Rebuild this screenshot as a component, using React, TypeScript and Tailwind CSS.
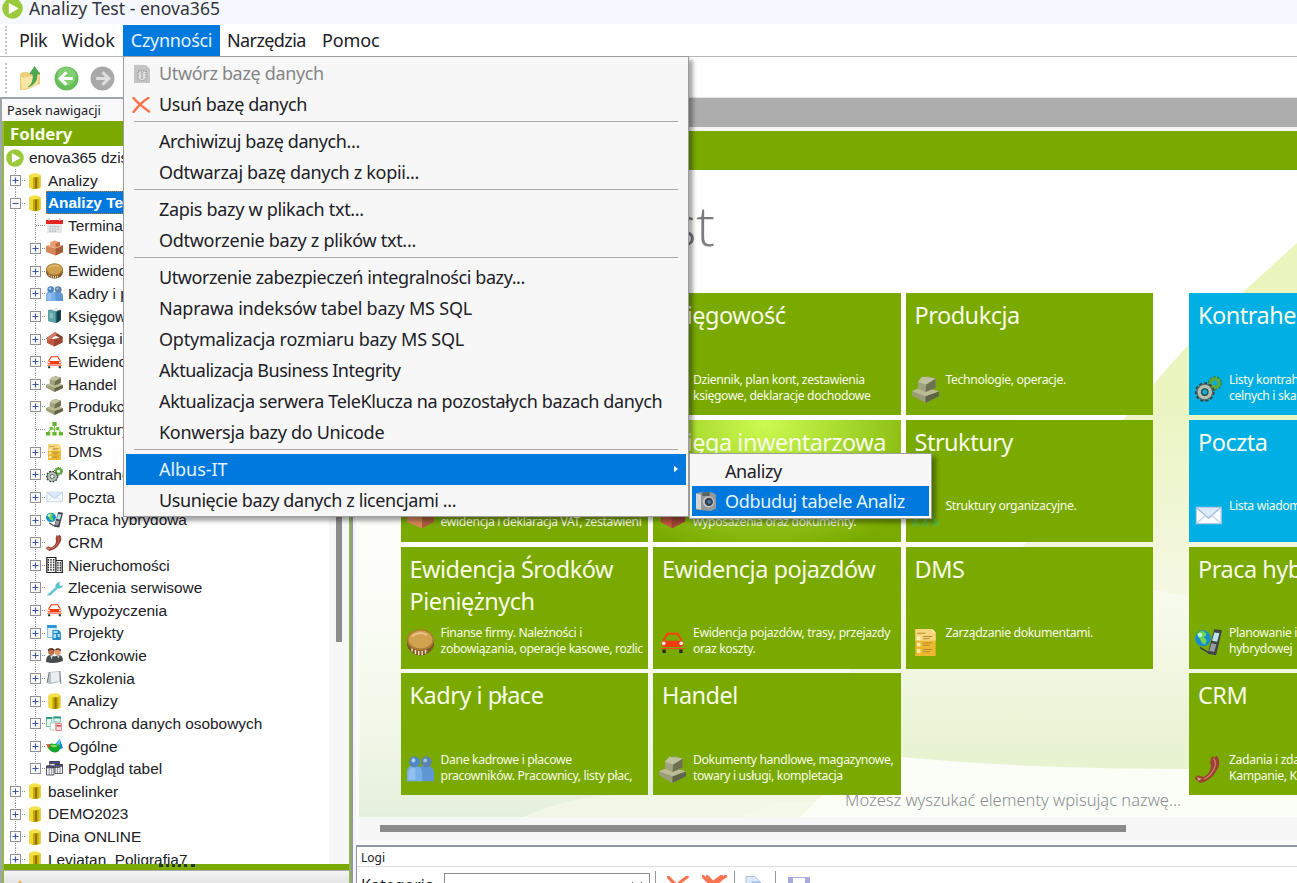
import React from "react";

type Kind =
  | "db" | "calendar" | "box" | "coin" | "people" | "book" | "house" | "car" | "blocks" | "org" | "doc"
  | "gears" | "mail" | "globe" | "phone" | "building" | "wrench" | "project" | "members" | "training"
  | "privacy" | "general" | "tables" | "camera";

function Art({ kind }: { kind: Kind }) {
  switch (kind) {
    case "db":
      return (<g><path d="M2.500 2.300h11v12.200q-5.500 3-11 0z" fill="#c9a800" /><path d="M2.500 2.300h3.500v13.200q-2.500-.3-3.500-1z" fill="#f0dc30" /><path d="M8 4h2v11.500H8z" fill="#8d7400" /><path d="M11.700 3h1.800v11.500l-1.800.8z" fill="#e2cb24" /><ellipse cx="8" cy="2.300" rx="5.500" ry="2" fill="#f3e248" /></g>);
    case "calendar":
      return (<g><path d="M1 2h14v13H1z" fill="#e4e7e8" /><path d="M0 2h16v4H0z" fill="#e32420" /><path d="M3 0v3M13 0v3" stroke="#bbb" strokeWidth="1.200" /><path d="M3 8.500h10M3 11h10M3 13.200h7" stroke="#a9b3b7" strokeWidth="1" strokeDasharray="1.500 1" /></g>);
    case "box":
      return (<g><path d="M0 6l6-2 10 1.500V12l-7 3.500L0 12z" fill="#d58659" /><path d="M9 8.500l7-3V12l-7 3.500z" fill="#a85d38" /><path d="M0 6l6-2 10 1.500-7 3z" fill="#f2b58d" /><path d="M4 2l4-1.500L13 2v4L9 7.500 4 6z" fill="#e79d70" /><path d="M9 3.500L13 2v4L9 7.500z" fill="#b86d45" /></g>);
    case "coin":
      return (<g><path d="M0 6.500v3q1 4.500 5.500 5.700l2.500.6 2.500-.6q4.500-1.200 5.500-5.700v-3z" fill="#7d5526" /><path d="M3 11.500v1.800M5 12.500v2.300M7 13v2.500M9 13v2.500M11 12.500v2" stroke="#f3e2c4" strokeWidth=".9" /><ellipse cx="8" cy="6.500" rx="8" ry="6.300" fill="#a87a32" /><ellipse cx="8" cy="6.200" rx="7.100" ry="5.300" fill="#d0a250" /><path d="M3 4.500q4-3.500 9-1" stroke="#e6c688" fill="none" /></g>);
    case "people":
      return (<g><path d="M6.500 15V9q0-3 2-3h5q2.500 1 2.500 4v5z" fill="#5f96d4" /><circle cx="11.500" cy="3.500" r="3.200" fill="#5d83b0" /><path d="M0 15V9q0-2.500 2-3h4q3 .5 3 4v5z" fill="#78aee6" /><path d="M1 14v-4q0-2.500 2-3h2v7z" fill="#9cc9f4" opacity=".7" /><circle cx="4.500" cy="3.500" r="3.200" fill="#4f87c4" /><circle cx="3.800" cy="2.600" r="1.200" fill="#a9d2f5" /><circle cx="10.800" cy="2.600" r="1.100" fill="#a9c8e0" /></g>);
    case "book":
      return (<g><path d="M2 2l8-1.500L14 2v10l-4 3-8-2z" fill="#2c7c83" /><path d="M2 2l7 1.500V15l-7-2z" fill="#5fa4a7" /><path d="M10 3.800L14 2v10l-4 3z" fill="#173f4a" /><path d="M3 1.800l7-1.200 3.500 1-4 1.700z" fill="#eceeef" /><path d="M3.500 5l3 .6v5l-3-.7z" fill="#8dc1bf" /></g>);
    case "house":
      return (<g><path d="M1 7l6 1 8.500-2v5.500L8 15.500l-7-3.500z" fill="#c0563f" /><path d="M7.500 9l8-3v5.500l-8 4z" fill="#9e4635" /><path d="M0 7.500L8.500 1l7.500 5-1 2-6-3.500-7 5z" fill="#8b3b2d" /><path d="M0 7.500L8.500 1l2.500 1.500-8.500 7z" fill="#d37b62" /></g>);
    case "car":
      return (<g fill="none"><path d="M2.500 7L5 2.800h6L13.500 7" stroke="#ff3d10" strokeWidth="1.100" /><rect x="1.500" y="7" width="13" height="3.600" rx="1.500" fill="#f33b10" /><circle cx="2.800" cy="8.500" r="1.100" fill="#ffe8dc" /><circle cx="13.200" cy="8.500" r="1.100" fill="#ffe8dc" /><path d="M1 11.600h14" stroke="#ee4c20" strokeWidth=".7" /><path d="M2 12.200h2v2H2zM12 12.200h2v2h-2z" fill="#24301a" /></g>);
    case "blocks":
      return (<g><path d="M0 9l6-2.500L16 9v3L8 16l-8-4.500z" fill="#9a9d76" /><path d="M8 12l8-3v3L8 16z" fill="#5f6446" /><path d="M0 9l6-2.500L16 9l-8 3z" fill="#b9bc94" /><path d="M3.500 3L9 0l5 1.500V7L8 9.500 3.500 7.500z" fill="#a0a37e" /><path d="M8.500 4.500L14 1.500V7L8 9.500z" fill="#6d7151" /><path d="M3.500 3.500L6 .5l8 1-5.500 3.500z" fill="#bfc19f" /></g>);
    case "org":
      return (<g fill="#64b52c"><path d="M6 1h4v4H6zM3.500 6h2.800v3H3.500zM9.700 6h2.800v3H9.700zM0 11h4v3.500H0zM6 11h4v3.500H6zM12 11h4v3.500h-4z" /><path d="M8 4v8M2 11l3-3h6l3 3" fill="none" stroke="#78c442" strokeWidth="1" /></g>);
    case "doc":
      return (<g><path d="M2 0h10l2 2v14H2z" fill="#ecb930" /><path d="M2 0h10l2 2v5H2z" fill="#f8d77c" /><path d="M12 0v2h2z" fill="#fff0bd" /><path d="M3 4.500h2v2H3zM3 8.200h2v2H3zM3 12h2v2H3z" fill="#fff0b8" /><path d="M3 2.500h5M6.500 4.500h5.500M6.500 5.800h4M6.500 8.300h5.500M6.500 9.600h4M6.500 12.200h5.500M6.500 13.500h4" stroke="#b08a34" strokeWidth=".6" /></g>);
    case "gears":
      return (<g fill="none"><circle cx="11.800" cy="4.200" r="3.700" stroke="#397c29" strokeWidth="1" strokeDasharray="1.300 1" /><circle cx="11.800" cy="4.200" r="2.500" stroke="#62a83e" strokeWidth="2" /><circle cx="5.800" cy="9.500" r="5.200" stroke="#33403b" strokeWidth="1.300" strokeDasharray="1.700 1.300" /><circle cx="5.800" cy="9.500" r="4.600" stroke="#55625a" strokeWidth="1" /><circle cx="5.800" cy="9.500" r="3.200" stroke="#b5c1b4" strokeWidth="2.200" /><circle cx="5.800" cy="9.500" r="1.900" stroke="#3b4843" strokeWidth=".8" /></g>);
    case "mail":
      return (<g><path d="M.8 3.200h14.700v9.600H.8z" fill="#f8fbff" stroke="#b4c9df" strokeWidth=".7" /><path d="M1.200 3.600l6.800 6 7-6" fill="#dce9f9" stroke="#9bb8db" strokeWidth=".7" /><path d="M1.200 12.300l5-4.300M15 12.300L10 8" stroke="#c3d5e9" strokeWidth=".7" /></g>);
    case "globe":
      return (<g><circle cx="4.700" cy="5.500" r="4.700" fill="#148fd0" /><path d="M1 3q3-3 5-1 2 1-1 3 3 1 1 4-2 0-3-3z" fill="#70d650" /><circle cx="3" cy="3.500" r="1.300" fill="#d4ffff" opacity=".8" /><path d="M11.500 0l4.500.8-3.500 14.700-5-.8z" fill="#414549" /><path d="M11.500 2l3 .5-1.400 5-3-.6z" fill="#b8e4f0" /><path d="M9.700 8.500l3 .5-1.300 4.500-3-.5z" fill="#959ba0" /><path d="M3 11l5 3" stroke="#3b444a" /></g>);
    case "phone":
      return (<g><path d="M10 0q1 1.500 3-.2 3 4-.4 9.300Q9 15 3 16L0 13.500q0-1.500 2-2l3 1q4-2 4.500-6.500L9 3.500z" fill="#9d3f31" /><path d="M11 1.500q2 2.500.3 6-2.500 5-6 6" stroke="#c97968" fill="none" strokeWidth=".8" /><path d="M1 12.500l3 1-2 1.300z" fill="#caa47b" /></g>);
    case "building":
      return (<g><path d="M.8.500h8.500v15H.8zM9.300 3.500h6v12h-6z" fill="#fff" stroke="#222" strokeWidth="1.200" /><path d="M2.200 2v12M4.700 2v12M7.200 2v12M11.200 5v9M13.500 5v9" stroke="#333" strokeWidth="1.300" strokeDasharray="1.700 .8" /></g>);
    case "wrench":
      return (<g><path d="M1 15l8-8q-.7-3 3-5l1-.5-.5 3.200L14 6l2-1q-.5 4-5 3.500L4 15.500H1z" fill="#5ac4cf" /><path d="M2.500 14l7-7" stroke="#8bd9df" /></g>);
    case "project":
      return (<g><path d="M1.500.5h8v12h-8z" fill="#e7f1f8" stroke="#6fb0dc" strokeWidth=".8" /><path d="M1 0h9v3H1z" fill="#289bd4" /><path d="M6 5h6l2 2v8H6z" fill="#278ac7" /><path d="M7 6h4v2H7zM7 9h2.500v4H7zM11 9h2v3h-2z" fill="#a8dff1" /></g>);
    case "members":
      return (<g><circle cx="5" cy="4" r="3" fill="#ba704a" /><circle cx="11" cy="4" r="3" fill="#e09a6c" /><path d="M2 2.500q2.500-3.500 6 0M9 2q2.500-2.500 4.800.5" stroke="#4c2a1c" fill="none" strokeWidth="1.400" /><path d="M0 14q0-7 4-7l4 1.500L12 7q4 0 4 6-8 3.500-16 1z" fill="#454b4d" /><path d="M4 7.500l1 4 1.500-3.500M10.500 7.500l1 3 1.500-3" fill="#d2d6d8" /></g>);
    case "training":
      return (<g><path d="M3 2l10-1v11l-9 2-3-1z" fill="#b3bcc4" /><path d="M4.500 2.500l8-.8v9.500l-8 1.300z" fill="#e8edf2" /><path d="M3 2L1 13M13 1l1 13" stroke="#74808a" /></g>);
    case "privacy":
      return (<g><path d="M.5 1.500h5v9h-5zM7.500 1h6v5h-6z" fill="#eaf6f0" stroke="#51b29b" strokeWidth=".8" /><path d="M0 1h6v2H0zM7 .5h7v2H7z" fill="#2a9a89" /><path d="M4 7h5v7H4z" fill="#fff" stroke="#8cb79c" strokeWidth=".6" /><path d="M9.500 7.500h5v7h-5z" fill="#fbdede" stroke="#df6b6b" strokeWidth=".8" /><path d="M10 9h4v1.500h-4z" fill="#d53939" /></g>);
    case "general":
      return (<g><path d="M7 8l6-7 3 9-4 2z" fill="#1488df" /><path d="M9 7l4-6v8z" fill="#61c9ff" /><path d="M1 7q4-2.500 7-1l5.500 1q0 8-5.500 7.500T1 7z" fill="#16a52c" /><path d="M0 6l5 1-3 3z" fill="#e44b31" /><path d="M4 7q4-1 7 1-2 2-5 1z" fill="#7ee35d" /></g>);
    case "tables":
      return (<g stroke="#3a3c43" strokeWidth=".8"><path d="M3.500.5h9v6h-9zM.5 5h7v9h-7zM8.500 3.500h7v9h-7z" fill="#f2f2f6" /><path d="M3.500.5h9V2.500h-9zM.5 5h7v1.800h-7zM8.500 3.500h7v1.800h-7z" fill="#4d519f" /><path d="M3 7v7M5.300 7v7M10.800 6v6M13.200 6v6" strokeWidth=".5" /></g>);
    case "camera":
      return (<g><path d="M0 2l3-1h10l3 2v11l-4 2-12-1z" fill="#949a9b" /><path d="M0 2l4 1v12l-4-1z" fill="#d5d6d4" /><path d="M5 1h6v3H5z" fill="#5c6261" /><circle cx="10" cy="8.700" r="4.500" fill="#c2c8cc" /><circle cx="10.300" cy="8.700" r="3.300" fill="#373e46" /><circle cx="10.600" cy="8.700" r="1.700" fill="#3e7499" /></g>);
  }
}

function Icon({ kind, className }: { kind: Kind; className: string }) {
  return (
    <svg viewBox="0 0 16 16" className={className} preserveAspectRatio="none">
      <Art kind={kind} />
    </svg>
  );
}

function Logo({ className }: { className: string }) {
  return (
    <svg viewBox="0 0 20 20" className={className}>
      <circle cx="10" cy="10" r="9.800" fill="#9ac93a" />
      <path d="M6.500 4.500L16 10l-9.500 5.500z" fill="#fff" />
    </svg>
  );
}

function Cross({ className }: { className: string }) {
  return (
    <svg viewBox="0 0 18 16" className={className}>
      <path d="M1 1q4 5 15.500 13.500M16 .8Q8 6 1 15" fill="none" stroke="#fa7350" strokeWidth="2.500" strokeLinecap="round" />
    </svg>
  );
}

type Node = { label: string; kind?: Kind; level: 0 | 1 | 2; leaf?: boolean; open?: boolean; last?: boolean };

const nodes: Node[] = [
  { label: "enova365 dziś", level: 0 },
  { label: "Analizy", kind: "db", level: 1 },
  { label: "Analizy Test", kind: "db", level: 1, open: true },
  { label: "Terminarz", kind: "calendar", level: 2, leaf: true },
  { label: "Ewidencja", kind: "box", level: 2 },
  { label: "Ewidencja", kind: "coin", level: 2 },
  { label: "Kadry i płace", kind: "people", level: 2 },
  { label: "Księgowość", kind: "book", level: 2 },
  { label: "Księga inw", kind: "house", level: 2 },
  { label: "Ewidencja", kind: "car", level: 2 },
  { label: "Handel", kind: "blocks", level: 2 },
  { label: "Produkcja", kind: "blocks", level: 2 },
  { label: "Struktury", kind: "org", level: 2, leaf: true },
  { label: "DMS", kind: "doc", level: 2 },
  { label: "Kontrahenci", kind: "gears", level: 2 },
  { label: "Poczta", kind: "mail", level: 2 },
  { label: "Praca hybrydowa", kind: "globe", level: 2 },
  { label: "CRM", kind: "phone", level: 2 },
  { label: "Nieruchomości", kind: "building", level: 2 },
  { label: "Zlecenia serwisowe", kind: "wrench", level: 2 },
  { label: "Wypożyczenia", kind: "car", level: 2 },
  { label: "Projekty", kind: "project", level: 2 },
  { label: "Członkowie", kind: "members", level: 2 },
  { label: "Szkolenia", kind: "training", level: 2 },
  { label: "Analizy", kind: "db", level: 2 },
  { label: "Ochrona danych osobowych", kind: "privacy", level: 2 },
  { label: "Ogólne", kind: "general", level: 2 },
  { label: "Podgląd tabel", kind: "tables", level: 2, last: true },
  { label: "baselinker", kind: "db", level: 1 },
  { label: "DEMO2023", kind: "db", level: 1 },
  { label: "Dina ONLINE", kind: "db", level: 1 },
  { label: "Leviatan_Poligrafia7", kind: "db", level: 1 },
];

function Guide({ box, leaf, open, last }: { box?: boolean; leaf?: boolean; open?: boolean; last?: boolean }) {
  return (
    <svg viewBox="0 0 20 22.64" className="h-full w-5 shrink-0">
      <path d={last ? "M10.500 0v11" : "M10.500 0v22.640"} stroke="#858585" strokeDasharray="1 1" />
      {(box || leaf) && <path d="M11 11.500h9.500" stroke="#858585" strokeDasharray="1 1" />}
      {box && (
        <g>
          <rect x="5.500" y="6.500" width="10" height="10" fill="#fbfbfb" stroke="#909090" />
          <path d={open ? "M7.500 11.500h6" : "M7.500 11.500h6M10.500 8.500v6"} stroke="#3c55a5" strokeWidth="1.100" />
        </g>
      )}
    </svg>
  );
}

function TreeRow({ n }: { n: Node }) {
  if (n.level === 0) {
    return (
      <div className="flex h-[22.64px] items-center pl-[2px]">
        <Logo className="h-[18px] w-[18px]" />
        <span className="ml-[5px]">{n.label}</span>
      </div>
    );
  }
  return (
    <div className="flex h-[22.64px] items-center pl-px">
      <Guide box={n.level === 1} open={n.open} />
      {n.level === 2 && <Guide box={!n.leaf} leaf={n.leaf} last={n.last} />}
      {n.level === 1 ? (
        <Icon kind="db" className="ml-[2px] h-4 w-4 shrink-0" />
      ) : (
        <Icon kind={n.kind as Kind} className="ml-px h-4 w-[17px] shrink-0" />
      )}
      {n.open ? (
        <span className="mt-[-2px] ml-[3px] h-[23px] w-[110px] border border-dotted border-[#c07a30] bg-[#0078dc] px-px leading-[22px] font-bold text-white">{n.label}</span>
      ) : (
        <span className="ml-[5px]">{n.label}</span>
      )}
    </div>
  );
}

type TileData = { title?: string; lines?: string[]; kind?: Kind; blue?: boolean; hot?: boolean };

const tiles: TileData[] = [
  {},
  { title: "Księgowość", lines: ["Dziennik, plan kont, zestawienia", "księgowe, deklaracje dochodowe"] },
  { title: "Produkcja", lines: ["Technologie, operacje."], kind: "blocks" },
  { lines: ["", "ewidencja i deklaracja VAT, zestawieni"], kind: "box" },
  { title: "Księga inwentarzowa", lines: ["", "wyposażenia oraz dokumenty."], kind: "house", hot: true },
  { title: "Struktury", lines: ["Struktury organizacyjne."], kind: "org" },
  { title: "Ewidencja Środków Pieniężnych", lines: ["Finanse firmy. Należności i", "zobowiązania, operacje kasowe, rozlic"], kind: "coin" },
  { title: "Ewidencja pojazdów", lines: ["Ewidencja pojazdów, trasy, przejazdy", "oraz koszty."], kind: "car" },
  { title: "DMS", lines: ["Zarządzanie dokumentami."], kind: "doc" },
  { title: "Kadry i płace", lines: ["Dane kadrowe i płacowe", "pracowników. Pracownicy, listy płac,"], kind: "people" },
  { title: "Handel", lines: ["Dokumenty handlowe, magazynowe,", "towary i usługi, kompletacja"], kind: "blocks" },
];

const sideTiles: TileData[] = [
  { title: "Kontrahenci", lines: ["Listy kontrahentów,", "celnych i skarbowych"], kind: "gears", blue: true },
  { title: "Poczta", lines: ["Lista wiadomości"], kind: "mail", blue: true },
  { title: "Praca hybrydowa", lines: ["Planowanie i", "hybrydowej"], kind: "globe" },
  { title: "CRM", lines: ["Zadania i zdarzenia,", "Kampanie, Kontakty"], kind: "phone" },
];

function Tile({ t }: { t: TileData }) {
  const bg = t.blue
    ? "bg-[#00b0e4]"
    : t.hot
      ? "bg-[radial-gradient(ellipse_75%_110%_at_45%_3%,#cdfa50_0%,#a5d82c_45%,#7aab00_100%)]"
      : "bg-[#7aa900]";
  return (
    <div className={"flex flex-col overflow-hidden text-[#f8fce9] " + bg}>
      <div className="h-[78.500px] shrink-0 pt-[6px] pl-[9px] text-[23.5px] leading-8 tracking-[-0.5px]">{t.title}</div>
      <div className="flex h-8 pl-[6px]">
        <div className="w-[34px] shrink-0 pt-[4px]">{t.kind && <Icon kind={t.kind} className="h-[27px] w-[27px]" />}</div>
        <div className="text-[12.2px] leading-4 tracking-[-0.35px] whitespace-nowrap">
          {(t.lines ?? []).map((l, i) => (
            <div key={i} className="h-4">{l}</div>
          ))}
        </div>
      </div>
    </div>
  );
}

function Backdrop() {
  return (
    <svg viewBox="359 170 938 647" className="absolute inset-0 h-full w-full" preserveAspectRatio="none">
      <defs>
        <linearGradient id="base" x1="0" y1="0" x2="0" y2="1">
          <stop offset="0" stopColor="#fff" /><stop offset=".45" stopColor="#fcfdf8" /><stop offset=".8" stopColor="#f1f7e8" /><stop offset="1" stopColor="#e5f0dc" />
        </linearGradient>
        <linearGradient id="ray" x1="0" y1="0" x2="0" y2="1">
          <stop offset="0" stopColor="#e9f6bd" /><stop offset=".4" stopColor="#eaf5bf" /><stop offset="1" stopColor="#f5f8e6" />
        </linearGradient>
        <linearGradient id="hill" x1="0" y1="0" x2="0" y2="1">
          <stop offset="0" stopColor="#fbfef6" /><stop offset=".35" stopColor="#f3f8e4" /><stop offset=".75" stopColor="#e8f3d2" /><stop offset="1" stopColor="#e8f3d2" />
        </linearGradient>
      </defs>
      <path d="M359 170h938v647H359z" fill="#fff" />
      <path d="M359 400h650v417H359z" fill="url(#base)" />
      <path d="M1297 243L1242 293Q1190 340 1154 384L1123 420Q1080 480 1020 550v60h277z" fill="url(#ray)" />
      <path d="M850 590q150-60 304 0 80 16 143 20v207H850z" fill="url(#hill)" />
      <path d="M523 817q60-27 130-22h190v22z" fill="#f1f7e4" />
      <path d="M740 817l40-15h140l-20 15z" fill="#f5f9e8" />
      <path d="M800 817q60-62 101-60 90 8 160 10 120 4 236 0v50z" fill="#fafef6" />
    </svg>
  );
}

type MenuEntry = { text: string; track: string } | null;
const menuEntries: MenuEntry[] = [
  { text: "Utwórz bazę danych", track: "tracking-[-0.34px]" },
  { text: "Usuń bazę danych", track: "tracking-[-0.40px]" },
  null,
  { text: "Archiwizuj bazę danych...", track: "tracking-[-0.40px]" },
  { text: "Odtwarzaj bazę danych z kopii...", track: "tracking-[-0.31px]" },
  null,
  { text: "Zapis bazy w plikach txt...", track: "tracking-[-0.31px]" },
  { text: "Odtworzenie bazy z plików txt...", track: "tracking-[-0.29px]" },
  null,
  { text: "Utworzenie zabezpieczeń integralności bazy...", track: "tracking-[-0.42px]" },
  { text: "Naprawa indeksów tabel bazy MS SQL", track: "tracking-[-0.22px]" },
  { text: "Optymalizacja rozmiaru bazy MS SQL", track: "tracking-[-0.22px]" },
  { text: "Aktualizacja Business Integrity", track: "tracking-[-0.49px]" },
  { text: "Aktualizacja serwera TeleKlucza na pozostałych bazach danych", track: "tracking-[-0.37px]" },
  { text: "Konwersja bazy do Unicode", track: "tracking-[-0.30px]" },
  null,
  { text: "Albus-IT", track: "tracking-[-0.05px]" },
  { text: "Usunięcie bazy danych z licencjami ...", track: "tracking-[-0.41px]" },
];

function DropMenu() {
  return (
    <div className="absolute top-[56px] left-[123px] z-20 flex h-[461px] w-[566px] flex-col border border-[#9c9c9c] bg-[#f7f7f7] px-[2px] pt-[1.3px] text-[18px] shadow-[4px_4px_4px_rgba(0,0,0,0.35)]">
      {menuEntries.map((m, i) =>
        m === null ? (
          <div key={i} className="flex h-[6.2px] shrink-0 items-start px-[8px] pt-px">
            <div className="h-px w-full bg-[#a8a8a8]" />
          </div>
        ) : (
          <div
            key={i}
            className={
              "flex h-[30.9px] shrink-0 items-center whitespace-nowrap " +
              (m.text === "Albus-IT" ? "bg-[#0079de] text-[#e6f4ff]" : i === 0 ? "text-[#858585]" : "text-[#202026]")
            }
          >
            <div className="flex w-[33px] shrink-0 items-center pl-[6px]">
              {i === 0 && (
                <svg viewBox="0 0 16 18" className="ml-[2px] h-[18px] w-4">
                  <path d="M0 0h12l4 4v14H0z" fill="#c4c4c4" />
                  <path d="M4 6h8v8q-4 3-8 0z" fill="#dedede" stroke="#8b8b8b" strokeDasharray="1.500 1" />
                  <path d="M8 7v7" stroke="#999" />
                </svg>
              )}
              {i === 1 && <Cross className="h-4 w-[19px]" />}
            </div>
            <span className={m.track}>{m.text}</span>
            {m.text === "Albus-IT" && (
              <svg viewBox="0 0 5 8" className="mr-[8px] ml-auto h-2 w-[4px]">
                <path d="M0 0l5 4-5 4z" fill="#fff" />
              </svg>
            )}
          </div>
        ),
      )}
    </div>
  );
}

function SubMenu() {
  return (
    <div className="absolute top-[453px] left-[689px] z-30 flex h-[66px] w-[243px] flex-col border border-[#9c9c9c] bg-[#f7f7f7] p-[2px] text-[18px] text-[#202026] shadow-[4px_4px_4px_rgba(0,0,0,0.35)]">
      <div className="flex h-[30px] items-center pt-px pl-[33px] tracking-[-0.4px]">Analizy</div>
      <div className="flex h-[31px] items-center bg-[#0079de] pt-px text-[#e6f4ff]">
        <Icon kind="camera" className="ml-[4px] h-5 w-5" />
        <span className="ml-[9px] tracking-[-0.32px] whitespace-nowrap">Odbuduj tabele Analiz</span>
      </div>
    </div>
  );
}

function Grip({ className }: { className: string }) {
  return <div className={"w-0 border-l-2 border-dotted border-[#c4c4c4] " + className} />;
}

export default function App() {
  return (
    <div className="relative flex h-[883px] w-[1297px] flex-col overflow-hidden bg-white font-['Noto_Sans','Open_Sans',sans-serif] text-[#202026]">
      <div className="flex h-6 shrink-0 items-start bg-[#f5f8fe]">
        <Logo className="mt-[-2px] ml-[2px] h-[21px] w-[21px]" />
        <span className="mt-[-6px] ml-[6px] text-[17.6px] leading-7 text-[#33333b]">Analizy Test - enova365</span>
      </div>
      <div className="flex h-[33px] shrink-0 items-center border-b border-[#b5b5b5] text-[18px]">
        <Grip className="ml-[5px] h-[28px]" />
        <span className="ml-[12px] w-[43px] tracking-[-0.4px]">Plik</span>
        <span className="w-[61px]">Widok</span>
        <span className="flex h-[31px] w-[97px] items-center justify-center bg-[#0079de] tracking-[-0.3px] text-[#e6f4ff]">Czynności</span>
        <span className="ml-[7px] w-[95px] tracking-[-0.6px]">Narzędzia</span>
        <span className="tracking-[-0.1px]">Pomoc</span>
      </div>
      <div className="flex h-[40px] shrink-0 items-center pt-[2px]">
        <Grip className="ml-[5px] h-[30px]" />
        <svg viewBox="0 0 22 25" className="ml-[13px] h-[25px] w-[22px]">
          <path d="M0 8l3-2h5l2 2 10-2v12L6 24H0z" fill="#edcf80" />
          <path d="M1 12l18-3-2 10-15 5z" fill="#f9e5a6" />
          <path d="M8 21q6-4 5-13H9.500L14.500.5 20 8h-3q1 10-9 13z" fill="#4caa4e" stroke="#3b8a45" strokeWidth=".5" />
        </svg>
        <svg viewBox="0 0 24 24" className="ml-[12px] h-[25px] w-[25px]">
          <circle cx="12" cy="12" r="11.500" fill="#66bd58" /><circle cx="12" cy="10" r="9" fill="#82cf73" />
          <path d="M18 12H7M12 6l-6 6 6 6" fill="none" stroke="#fff" strokeWidth="3" />
        </svg>
        <svg viewBox="0 0 24 24" className="ml-[11px] h-[25px] w-[25px]">
          <circle cx="12" cy="12" r="11.500" fill="#a9a9a9" />
          <path d="M6 12h11M12 6l6 6-6 6" fill="none" stroke="#dedede" strokeWidth="3" />
        </svg>
      </div>

      <div className="flex min-h-0 flex-1">
        <div className="flex w-[351px] shrink-0 flex-col border-t-2 border-l-2 border-[#a0a5a8] bg-white">
          <div className="flex h-[22px] shrink-0 items-center bg-[#f9f9f9] pt-[2px] pl-[5px] text-[12.7px]">Pasek nawigacji</div>
          <div className="flex min-h-0 flex-1 flex-col border-x-2 border-[#8fb94a]">
            <div className="flex h-[25px] shrink-0 items-center bg-[#7aa900] pl-[6px] text-[16.8px] font-bold text-[#fbfff0]">Foldery</div>
            <div className="flex h-[718px] shrink-0 overflow-hidden pt-[0.6px] font-['Liberation_Sans',sans-serif] text-[15.4px]">
              <div className="min-w-0 flex-1 whitespace-nowrap">
                {nodes.map((n, i) => (
                  <TreeRow key={i} n={n} />
                ))}
              </div>
              <div className="w-5 bg-[#f7f7f7] pl-[7px]">
                <div className="h-[495px] w-[6px] bg-[#8b8b8b]" />
              </div>
            </div>
            <div className="flex h-[6px] shrink-0 justify-center bg-[#7aa900]">
              <div className="h-0 w-9 border-t-3 border-dotted border-[#273b22]" />
            </div>
            <div className="flex h-[14px] shrink-0 items-start overflow-hidden border-t border-[#aaa] bg-[linear-gradient(#f4f4f4,#e4e4e4)] text-[15px] font-bold">
              <svg viewBox="0 0 16 16" className="mt-[9px] ml-[8px] h-4 w-4"><path d="M8 0l3 5 5 1-4 4 1 6-5-3-5 3 1-6-4-4 5-1z" fill="#e5b63c" /></svg>
              <span className="mt-[7px] ml-[9px] leading-5">Aktówki</span>
            </div>
          </div>
        </div>
        <div className="w-[5px] shrink-0 border-l-2 border-[#8f96a4] bg-[#f5f5f5]" />

        <div className="flex min-w-0 flex-1 flex-col">
          <div className="h-[30px] shrink-0 border-t border-[#e0e0e0] bg-[#adadad]" />
          <div className="h-[4px] shrink-0 bg-[#f5f5f5]" />
          <div className="flex h-[686px] shrink-0 flex-col pl-[3px]">
            <div className="h-[39px] shrink-0 bg-[#7aa900]" />
            <div className="relative h-[647px] shrink-0 overflow-hidden">
              <Backdrop />
              <div className="relative flex h-full flex-col">
                <div className="h-[123.400px] w-[356px] shrink-0 pt-[18px] text-right font-['Open_Sans',sans-serif] text-[56px] leading-[72px] font-light whitespace-nowrap text-[#7b7b80]">Analizy Test</div>
                <div className="flex gap-[36px] pl-[41.500px]">
                  <div className="grid grid-cols-[247.500px_247.500px_247.500px] grid-rows-[122px_122px_122px_122px] gap-x-[5px] gap-y-[4.600px]">
                    {tiles.map((t, i) => (
                      <Tile key={i} t={t} />
                    ))}
                  </div>
                  <div className="grid shrink-0 grid-cols-[247.500px] grid-rows-[122px_122px_122px_122px] gap-y-[4.600px]">
                    {sideTiles.map((t, i) => (
                      <Tile key={i} t={t} />
                    ))}
                  </div>
                </div>
              </div>
              <span className="absolute right-[116px] bottom-[5px] text-[16.5px] leading-6 font-light whitespace-nowrap text-[#8c8c92]">Możesz wyszukać elementy wpisując nazwę...</span>
            </div>
          </div>
          <div className="ml-[3px] h-[23px] shrink-0 bg-[#f7f7f7] pt-[8px] pl-[21px]">
            <div className="h-[7px] w-[746px] bg-[#8b8b8b]" />
          </div>
          <div className="h-[5px] shrink-0 bg-[#fafafa]" />
          <div className="flex min-h-0 flex-1 flex-col overflow-hidden border-t-2 border-l border-[#8f96a4] bg-white">
            <div className="flex h-[20px] shrink-0 items-center border-b border-[#dcdcdc] pt-[2px] pl-[4px] text-[12px]">Logi</div>
            <div className="flex h-[30px] shrink-0 items-start bg-white pl-[4px]">
              <span className="mt-[6px] w-[83px] text-[16px] leading-6">Kategoria</span>
              <div className="mt-[6px] flex h-7 w-[206px] justify-end border border-[#878c96] pt-[7px] pr-[6px]">
                <svg viewBox="0 0 12 7" className="h-[7px] w-3"><path d="M1 1l5 5 5-5" fill="none" stroke="#555" /></svg>
              </div>
              <div className="mt-[4px] ml-[5px] h-7 w-px bg-[#999]" />
              <Cross className="mt-[9px] ml-[11px] h-5 w-[23px]" />
              <Cross className="mt-[8px] ml-[12px] h-5 w-[22px]" />
              <Cross className="mt-[8px] ml-[-18px] h-5 w-[22px]" />
              <div className="mt-[4px] ml-[6px] h-7 w-px bg-[#999]" />
              <svg viewBox="0 0 20 20" className="mt-[9px] ml-[10px] h-5 w-5"><path d="M1 .5h9l4 4V16H1z" fill="#dde9fa" stroke="#a9c2e6" /><path d="M7 6h8l4 4v10H7z" fill="#c0d6f3" stroke="#91b0dc" /></svg>
              <div className="mt-[4px] ml-[10px] h-7 w-px bg-[#999]" />
              <svg viewBox="0 0 22 20" className="mt-[10px] ml-[12px] h-5 w-[22px]"><path d="M0 0h22v20H0z" fill="#a9a9df" /><path d="M5 1h12v9H5z" fill="#fff" /></svg>
            </div>
          </div>
        </div>
      </div>
      <DropMenu />
      <SubMenu />
    </div>
  );
}
